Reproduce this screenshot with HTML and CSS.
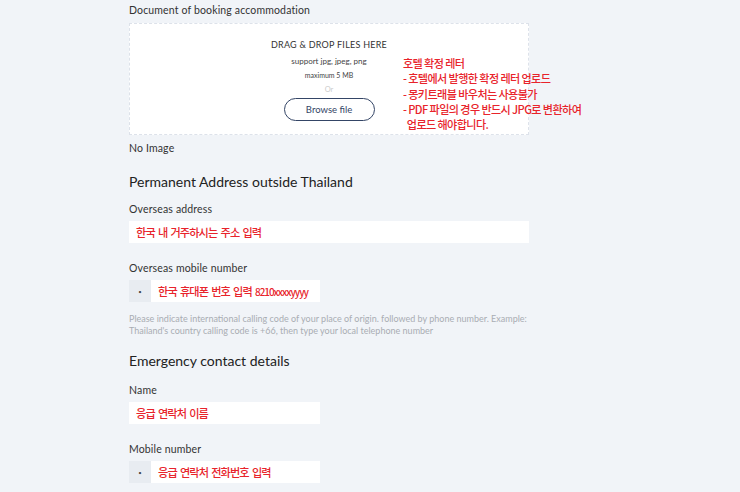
FILE: index.html
```html
<!DOCTYPE html>
<html lang="en">
<head>
<meta charset="utf-8">
<title>Form</title>
<link rel="stylesheet" href="styles.css">
</head>
<body>
<main class="form">
  <div class="field">
    <div class="label">Document of booking accommodation</div>
    <div class="dropzone">
      <div class="dz-title">DRAG &amp; DROP FILES HERE</div>
      <div class="dz-sub">support jpg, jpeg, png</div>
      <div class="dz-max">maximum 5 MB</div>
      <div class="dz-or">Or</div>
      <button class="browse">Browse file</button>
      <div class="note">
        <div>호텔 확정 레터</div>
        <div>- 호텔에서 발행한 확정 레터 업로드</div>
        <div>- 몽키트래블 바우처는 사용불가</div>
        <div>- PDF 파일의 경우 반드시 JPG로 변환하여</div>
        <div>&nbsp;&nbsp;업로드 해야합니다.</div>
      </div>
    </div>
    <div class="noimage">No Image</div>
  </div>

  <h2 class="heading heading-first">Permanent Address outside Thailand</h2>

  <div class="field">
    <div class="label">Overseas address</div>
    <div class="input wide">한국 내 거주하시는 주소 입력</div>
  </div>

  <div class="field">
    <div class="label">Overseas mobile number</div>
    <div class="phone">
      <span class="prefix">•</span>
      <span class="input">한국 휴대폰 번호 입력&nbsp;<span class="digits">8210xxxxyyyy</span></span>
    </div>
    <p class="help">Please indicate international calling code of your place of origin. followed by phone number. Example: Thailand's country calling code is +66, then type your local telephone number</p>
  </div>

  <h2 class="heading">Emergency contact details</h2>

  <div class="field">
    <div class="label">Name</div>
    <div class="input short">응급 연락처 이름</div>
  </div>

  <div class="field">
    <div class="label">Mobile number</div>
    <div class="phone">
      <span class="prefix">•</span>
      <span class="input">응급 연락처 전화번호 입력</span>
    </div>
  </div>
</main>
</body>
</html>
```
FILE: styles.css
```css
html, body {
  margin: 0;
  padding: 0;
  background: #f1f4f8;
}
body {
  font-family: Lato, "Noto Sans CJK KR", sans-serif;
  color: #2b2b2b;
}
.form {
  width: 400px;
  margin-left: 129px;
  padding-top: 3px;
}
.label {
  font-size: 10.5px;
  line-height: 14px;
  color: #333;
  letter-spacing: 0.15px;
}
.dropzone {
  position: relative;
  margin-top: 6px;
  height: 112px;
  box-sizing: border-box;
  background: #fff;
  border: 1px dashed #dde2ea;
  display: flex;
  flex-direction: column;
  align-items: center;
  padding-top: 14px;
}
.dz-title {
  font-size: 9px;
  line-height: 14px;
  letter-spacing: 0.25px;
  color: #333;
}
.dz-sub {
  font-size: 8px;
  line-height: 13px;
  margin-top: 3px;
  color: #444;
}
.dz-max {
  font-size: 7px;
  line-height: 13px;
  margin-top: 1px;
  color: #444;
}
.dz-or {
  font-size: 7.5px;
  line-height: 14px;
  margin-top: 1px;
  color: #ccc;
}
.browse {
  margin-top: 1px;
  width: 91px;
  height: 23px;
  border: 1.5px solid #344566;
  border-radius: 12px;
  background: #fff;
  color: #344566;
  font-family: Lato, sans-serif;
  font-size: 9.5px;
  padding: 0;
}
.note {
  position: absolute;
  left: 273px;
  top: 32px;
  font-family: "Noto Sans CJK KR", sans-serif;
  font-weight: 500;
  font-size: 11.1px;
  line-height: 15.3px;
  color: #e8232b;
  letter-spacing: -0.6px;
  white-space: nowrap;
}
.noimage {
  margin-top: 6px;
  font-size: 10.5px;
  line-height: 14px;
  color: #333;
  letter-spacing: 0.15px;
}
.heading {
  margin: 16px 0 0;
  font-weight: 400;
  font-size: 14px;
  line-height: 18px;
  color: #222;
}
.heading-first {
  margin-top: 18px;
}
.heading + .field { margin-top: 13px; }
.heading-first + .field { margin-top: 11px; }
.field + .field { margin-top: 18px; }
.input {
  display: flex;
  align-items: center;
  box-sizing: border-box;
  height: 22px;
  background: #fff;
  font-family: "Noto Sans CJK KR", sans-serif;
  font-weight: 500;
  font-size: 11.2px;
  letter-spacing: -0.9px;
  word-spacing: 1.5px;
  white-space: nowrap;
  color: #e8232b;
  padding-left: 7px;
  margin-top: 5px;
}
.digits {
  font-size: 10px;
  letter-spacing: -1.05px;
}
.input.wide { width: 400px; }
.input.short { width: 191px; }
.phone {
  display: flex;
  margin-top: 5px;
  width: 191px;
  height: 22px;
}
.prefix {
  width: 22px;
  flex: none;
  background: #e8ecf1;
  color: #444;
  font-size: 6px;
  display: flex;
  align-items: center;
  justify-content: center;
}
.phone .input {
  margin-top: 0;
  flex: 1;
}
.help {
  margin: 11px 0 0;
  font-size: 9px;
  line-height: 11.5px;
  color: #a9adb3;
}
```
